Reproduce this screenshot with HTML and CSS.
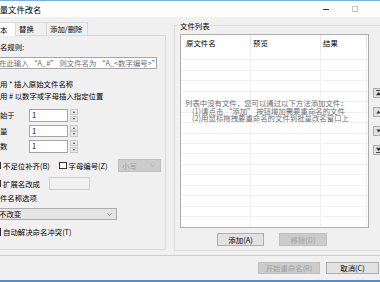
FILE: index.html
```html
<!DOCTYPE html>
<html lang="zh-CN">
<head>
<meta charset="utf-8">
<title>批量文件改名</title>
<link rel="stylesheet" href="styles.css">
</head>
<body>
<div class="window">
  <div class="titlebar">
    <span class="title">批量文件改名</span>
    <span class="tb-min"></span>
    <span class="tb-max"></span>
  </div>
  <div class="main">
    <div class="left">
      <div class="tabs">
        <div class="tab sel">文本</div>
        <div class="tab t2">替换</div>
        <div class="tab t3">添加/删除</div>
      </div>
      <div class="page">
        <div class="lbl">命名规则:</div>
        <div class="edit">在此输入 “A_#” 则文件名为 “A_&lt;数字编号&gt;”</div>
        <div class="hint h1">使用 * 插入原始文件名称</div>
        <div class="hint">使用 # 以数字或字母插入指定位置</div>
        <div class="spin-row first">
          <span class="slbl">开始于</span>
          <span class="spin-in">1</span>
          <span class="spin-btns"><i class="sb"><b class="tri-up"></b></i><i class="sb"><b class="tri-dn"></b></i></span>
        </div>
        <div class="spin-row">
          <span class="slbl">增量</span>
          <span class="spin-in">1</span>
          <span class="spin-btns"><i class="sb"><b class="tri-up"></b></i><i class="sb"><b class="tri-dn"></b></i></span>
        </div>
        <div class="spin-row">
          <span class="slbl">位数</span>
          <span class="spin-in">1</span>
          <span class="spin-btns"><i class="sb"><b class="tri-up"></b></i><i class="sb"><b class="tri-dn"></b></i></span>
        </div>
        <div class="check-row r1">
          <span class="cb"></span><span class="ctext w1">不足位补齐(B)</span>
          <span class="cb cb2"></span><span class="ctext w2">字母编号(Z)</span>
          <span class="combo dis small"><span class="ctxt">小写</span><svg class="chev" width="5" height="3" viewBox="0 0 5 3"><path d="M0.3 0.3 L2.5 2.5 L4.7 0.3" fill="none" stroke="#a8a8a8" stroke-width="0.7"/></svg></span>
        </div>
        <div class="check-row r2">
          <span class="cb"></span><span class="ctext w3">扩展名改成</span>
          <span class="field"></span>
        </div>
        <div class="lbl l2">文件名称选项</div>
        <div class="combo wide"><span class="ctxt">不改变</span><svg class="chev" width="5" height="3" viewBox="0 0 5 3"><path d="M0.3 0.3 L2.5 2.5 L4.7 0.3" fill="none" stroke="#707070" stroke-width="0.7"/></svg></div>
        <div class="check-row r3">
          <span class="cb"></span><span class="ctext">自动解决命名冲突(T)</span>
        </div>
      </div>
    </div>
    <div class="group">
      <div class="gtitle">文件列表</div>
      <div class="list-row">
        <div class="listview">
          <div class="lv-head">
            <span class="hc c1">原文件名</span>
            <span class="hc c2">预览</span>
            <span class="hc c3">结果</span>
          </div>
          <div class="lv-body">
            <span class="col c1"></span>
            <span class="col c2"></span>
            <span class="col c3"></span>
            <div class="empty-msg">
              <div>列表中没有文件，您可以通过以下方法添加文件：</div>
              <div class="ind">(1)请点击 “添加” 按钮增加需要重命名的文件</div>
              <div class="ind">(2)用鼠标拖拽要重命名的文件到批量改名窗口上</div>
            </div>
          </div>
        </div>
        <div class="side-btns">
          <span class="sbtn"><svg width="5" height="6" viewBox="0 0 5 6"><rect x="0" y="0" width="5" height="0.9" fill="#333"/><path d="M2.5 1.8 L5 5.2 L0 5.2 Z" fill="#333"/></svg></span>
          <span class="sbtn"><svg width="5" height="6" viewBox="0 0 5 6"><path d="M2.5 1.6 L4.6 4.4 L0.4 4.4 Z" fill="#333"/></svg></span>
          <span class="sbtn"><svg width="5" height="6" viewBox="0 0 5 6"><path d="M0.4 1.6 L4.6 1.6 L2.5 4.4 Z" fill="#333"/></svg></span>
          <span class="sbtn"><svg width="5" height="6" viewBox="0 0 5 6"><path d="M0 0.8 L5 0.8 L2.5 4.2 Z" fill="#333"/><rect x="0" y="5.1" width="5" height="0.9" fill="#333"/></svg></span>
        </div>
      </div>
      <div class="lv-btns">
        <span class="btn add">添加(A)</span>
        <span class="btn dis rem">移除(D)</span>
      </div>
    </div>
  </div>
  <div class="sep"></div>
  <div class="footer">
    <span class="btn dis start">开始重命名(R)</span>
    <span class="btn cancel">取消(C)</span>
  </div>
</div>
</body>
</html>
```

FILE: styles.css
```css
* { box-sizing: border-box; margin: 0; padding: 0; }
html, body { width: 380px; height: 282px; overflow: hidden; }
body {
  background: #f0f0f0;
  font-family: "Noto Sans CJK SC", "Noto Sans", sans-serif;
  font-size: 7.4px;
  line-height: 10px;
  color: #000;
}
.window {
  height: 282px;
  display: flex;
  flex-direction: column;
  border-top: 1px solid #7fb0e0;
  border-bottom: 2px solid #4a90d9;
  overflow: hidden;
}
.titlebar {
  height: 16px;
  flex: none;
  background: #fff;
  display: flex;
  align-items: center;
}
.title { font-size: 8.3px; margin-left: -8.5px; white-space: nowrap; }
.tb-min { margin-left: auto; width: 6px; height: 1px; background: #333; }
.tb-max { margin-left: 23px; margin-right: 22px; width: 6px; height: 6px; border: 1px solid #c4c4c4; }

.main { height: 238px; flex: none; display: flex; align-items: flex-start; }

.left { margin-left: -10px; width: 176px; flex: none; padding-top: 5px; display: flex; flex-direction: column; }
.tabs { display: flex; align-items: flex-end; height: 13px; position: relative; z-index: 1; }
.tab {
  height: 13px;
  border: 1px solid #d9d9d9;
  border-bottom: none;
  background: #f0f0f0;
  line-height: 12px;
  white-space: nowrap;
}
.tab.sel { width: 26px; height: 14px; padding-left: 1.6px; background: #fff; margin-bottom: -1px; line-height: 13px; }
.tab.t2 { width: 32px; padding-left: 3px; margin-left: -1px; }
.tab.t3 { width: 42px; padding-left: 3px; margin-left: -1px; }

.page {
  height: 215px;
  border: 1px solid #d9d9d9;
  padding: 6px 0 0 1.5px;
  display: flex;
  flex-direction: column;
  white-space: nowrap;
}
.lbl { height: 10px; }
.edit {
  margin-top: 5px;
  width: 164.5px;
  height: 12px;
  border: 1px solid #a5a5a5;
  background: #fff;
  color: #6d6d6d;
  padding-left: 5.5px;
  line-height: 10px;
  overflow: hidden;
}
.hint { height: 12px; line-height: 12px; }
.hint.h1 { margin-top: 9px; }

.spin-row { margin-top: 3px; height: 12.5px; display: flex; align-items: center; }
.spin-row.first { margin-top: 7px; }
.slbl { width: 36.5px; }
.spin-in {
  width: 39px;
  height: 12.5px;
  border: 1px solid #a5a5a5;
  background: #fff;
  padding-left: 2px;
  line-height: 10.5px;
}
.spin-btns { margin-left: 1.5px; width: 8.5px; height: 12.5px; display: flex; flex-direction: column; gap: 0.5px; }
.sb {
  flex: 1;
  border: 1px solid #c9c9c9;
  background: #ebebeb;
  display: flex;
  align-items: center;
  justify-content: center;
}
.tri-up { width: 0; height: 0; border-left: 1.6px solid transparent; border-right: 1.6px solid transparent; border-bottom: 2px solid #404040; }
.tri-dn { width: 0; height: 0; border-left: 1.6px solid transparent; border-right: 1.6px solid transparent; border-top: 2px solid #404040; }

.check-row { display: flex; align-items: center; }
.check-row.r1 { margin-top: 6.5px; height: 13px; }
.check-row.r2 { margin-top: 5px; height: 13px; }
.check-row.r3 { margin-top: 7px; height: 10px; }
.cb { width: 7.5px; height: 7.5px; border: 1px solid #333; background: #fff; margin-left: 1px; flex: none; }
.cb.cb2 { margin-left: 0; }
.ctext { margin-left: 2px; }
.ctext.w1 { width: 56px; }
.ctext.w2 { width: 49.5px; margin-left: 2px; }
.ctext.w3 { width: 46px; }

.combo {
  display: flex;
  align-items: center;
  border: 1px solid #acacac;
  background: #e5e5e5;
}
.combo .chev { margin-left: auto; }
.combo.small { width: 43px; height: 13px; padding: 0 5px 0 3px; }
.combo.dis { background: #cccccc; border-color: #bfbfbf; color: #9d9d9d; }
.combo.wide { margin-top: 5px; width: 124.5px; height: 12px; padding: 0 4px 0 5.5px; }
.field { width: 41px; height: 13px; border: 1px solid #cfcfcf; background: #f0f0f0; }
.lbl.l2 { margin-top: 3px; }

.group {
  margin-left: 8px;
  margin-top: 8px;
  width: 215px;
  flex: none;
  height: 226px;
  border: 1px solid #dcdcdc;
  padding-left: 5px;
  display: flex;
  flex-direction: column;
}
.gtitle {
  margin-top: -5px;
  margin-left: -1px;
  align-self: flex-start;
  background: #f0f0f0;
  padding: 0 1px;
  height: 9px;
  line-height: 9px;
}
.list-row { margin-top: 4px; display: flex; align-items: flex-start; }
.listview {
  width: 189px;
  height: 194px;
  border: 1px solid #adadad;
  background: #fff;
  display: flex;
  flex-direction: column;
  overflow: hidden;
}
.lv-head { height: 15px; display: flex; flex: none; }
.hc { border-right: 1px solid #e5e5e5; line-height: 15px; white-space: nowrap; }
.c1 { width: 70px; }
.c2 { width: 70px; }
.c3 { width: 46px; }
.hc.c1 { padding-left: 5px; }
.hc.c2, .hc.c3 { padding-left: 2px; }
.lv-body {
  flex: 1;
  display: flex;
  position: relative;
  background: repeating-linear-gradient(to bottom, transparent 0, transparent 9.45px, #efefef 9.45px, #efefef 10.45px);
}
.col { border-right: 1px solid #f0f0f0; height: 100%; }
.empty-msg {
  position: absolute;
  left: 4px;
  top: 49.3px;
  line-height: 7.6px;
  color: #6e6e6e;
  white-space: nowrap;
}
.empty-msg .ind { padding-left: 7px; }

.side-btns { margin-left: 4px; padding-top: 54px; display: flex; flex-direction: column; gap: 9px; }
.sbtn {
  width: 11px;
  height: 10px;
  border: 1px solid #adadad;
  background: #e1e1e1;
  display: flex;
  align-items: center;
  justify-content: center;
}

.lv-btns { margin-top: 5px; padding-left: 37px; display: flex; }
.btn {
  height: 13px;
  border: 1px solid #adadad;
  background: #e1e1e1;
  text-align: center;
  line-height: 11px;
  white-space: nowrap;
}
.btn.dis { background: #cccccc; border-color: #bfbfbf; color: #a0a0a0; }
.btn.add { width: 47px; }
.btn.rem { width: 48px; margin-left: 15px; }

.sep { height: 1px; flex: none; background: #cdcdcd; }
.footer {
  height: 24px;
  flex: none;
  display: flex;
  justify-content: flex-end;
  align-items: flex-start;
  padding: 6px 1px 0 0;
  gap: 6px;
}
.btn.start { width: 62px; height: 12px; line-height: 10px; }
.btn.cancel { width: 53px; height: 12px; line-height: 10px; }
```
